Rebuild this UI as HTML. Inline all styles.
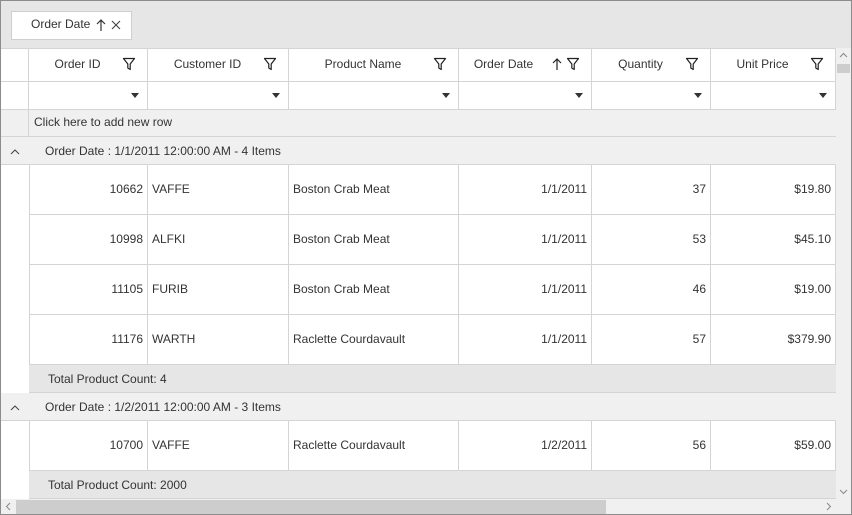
<!DOCTYPE html>
<html><head><style>
*{box-sizing:border-box;margin:0;padding:0}
body{width:852px;height:515px;overflow:hidden;background:#fff;font-family:"Segoe UI","Liberation Sans",sans-serif;font-size:12px;color:#333}
.a{position:absolute}
.outer{left:0;top:0;width:852px;height:515px;border:1px solid #8c8c8c}
.c{position:absolute;border-right:1px solid #d4d4d4;border-bottom:1px solid #d4d4d4;white-space:nowrap}
.t{position:absolute;white-space:nowrap}
.dd{position:absolute;width:0;height:0;border-left:4px solid transparent;border-right:4px solid transparent;border-top:5px solid #333}
</style></head><body>
<div class="a outer"></div>
<div class="a" style="left:1px;top:1px;width:850px;height:47px;background:#e6e6e6"></div>
<div class="a" style="left:11px;top:11px;width:121px;height:29px;background:#fff;border:1px solid #cfcfcf"></div>
<div class="t" style="left:31px;top:17px;color:#333">Order Date</div>
<svg class="a" style="left:95px;top:18px" width="28" height="14"><path d="M6 13V2M2 6l4-4 4 4" stroke="#333" fill="none" stroke-width="1.2"/><path d="M17 3l8 8M25 3l-8 8" stroke="#444" stroke-width="1.1"/></svg>
<div id="g"></div>
<script>
var cols=[[1,29],[29,148],[148,289],[289,459],[459,592],[592,711],[711,836]];
var names=["Order ID","Customer ID","Product Name","Order Date","Quantity","Unit Price"];
var h="";
function cell(x,y,w,hh,bg,bl){h+='<div class="c" style="left:'+x+'px;top:'+y+'px;width:'+w+'px;height:'+hh+'px;background:'+bg+(bl?';border-left:1px solid #d4d4d4':'')+'"></div>';}
for(var i=0;i<7;i++){var x=cols[i][0],w=cols[i][1]-x;cell(x,48,w,34,'#fff');cell(x,82,w,28,'#fff');
 h+='<div class="a" style="left:'+x+'px;top:48px;width:'+w+'px;height:1px;background:#d4d4d4"></div>';
 if(i>0){
 h+='<div class="t" style="left:'+x+'px;top:57px;width:'+(w-(i==4?44:22))+'px;text-align:center;color:#333">'+names[i-1]+'</div>';
 h+='<svg class="a" style="left:'+(cols[i][1]-26)+'px;top:57px" width="14" height="14"><path d="M1.5 1.5h11L8.2 7v5.5L5.8 11V7z" fill="none" stroke="#222" stroke-width="1.2" stroke-linejoin="round"/></svg>';
 if(i==4)h+='<svg class="a" style="left:'+(cols[i][1]-40)+'px;top:57px" width="10" height="14"><path d="M5 13V2M1 6l4-4 4 4" stroke="#222" fill="none" stroke-width="1.2"/></svg>';
 h+='<div class="dd" style="left:'+(cols[i][1]-17)+'px;top:93px"></div>';}}
h+='<div class="a" style="left:1px;top:110px;width:835px;height:27px;background:#f0f0f0;border-bottom:1px solid #d4d4d4"></div>';
h+='<div class="a" style="left:28px;top:110px;width:1px;height:27px;background:#d4d4d4"></div>';
h+='<div class="t" style="left:34px;top:115px">Click here to add new row</div>';
function grp(y,txt){h+='<div class="a" style="left:1px;top:'+y+'px;width:835px;height:28px;background:#f0f0f0;border-bottom:1px solid #d4d4d4"></div>';
 h+='<svg class="a" style="left:10px;top:'+(y+11)+'px" width="10" height="8"><path d="M1 6l4-4 4 4" fill="none" stroke="#444" stroke-width="1"/></svg>';
 h+='<div class="t" style="left:45px;top:'+(y+7)+'px">'+txt+'</div>';}
function sum(y,txt){h+='<div class="a" style="left:29px;top:'+y+'px;width:807px;height:28px;background:#e6e6e6;border-bottom:1px solid #d4d4d4"></div>';
 h+='<div class="t" style="left:48px;top:'+(y+7)+'px">'+txt+'</div>';}
function row(y,d){for(var i=1;i<7;i++){var x=cols[i][0],w=cols[i][1]-x;cell(x,y,w,50,'#fff',i==1);
 var r=(i==1||i==4||i==5||i==6);
 h+='<div class="t" style="left:'+(x+4)+'px;width:'+(w-9)+'px;top:'+(y+17)+'px;text-align:'+(r?'right':'left')+'">'+d[i-1]+'</div>';}}
grp(137,'Order Date : 1/1/2011 12:00:00 AM - 4 Items');
var rows=[["10662","VAFFE","Boston Crab Meat","1/1/2011","37","$19.80"],["10998","ALFKI","Boston Crab Meat","1/1/2011","53","$45.10"],["11105","FURIB","Boston Crab Meat","1/1/2011","46","$19.00"],["11176","WARTH","Raclette Courdavault","1/1/2011","57","$379.90"]];
for(var k=0;k<4;k++)row(165+50*k,rows[k]);
sum(365,'Total Product Count: 4');
grp(393,'Order Date : 1/2/2011 12:00:00 AM - 3 Items');
row(421,["10700","VAFFE","Raclette Courdavault","1/2/2011","56","$59.00"]);
sum(471,'Total Product Count: 2000');
document.getElementById('g').innerHTML=h;
</script>
<div class="a" style="left:836px;top:48px;width:15px;height:451px;background:#f0f0f0"></div>
<div class="a" style="left:837px;top:64px;width:13px;height:9px;background:#cdcdcd"></div>
<svg class="a" style="left:839px;top:52px" width="9" height="6"><path d="M1 5l3.5-3.5L8 5" fill="none" stroke="#888"/></svg>
<svg class="a" style="left:839px;top:489px" width="9" height="6"><path d="M1 1l3.5 3.5L8 1" fill="none" stroke="#888"/></svg>
<div class="a" style="left:1px;top:499px;width:850px;height:15px;background:#f0f0f0"></div>
<div class="a" style="left:16px;top:500px;width:590px;height:14px;background:#cdcdcd"></div>
<svg class="a" style="left:5px;top:502px" width="6" height="9"><path d="M5 1L1.5 4.5 5 8" fill="none" stroke="#888"/></svg>
<svg class="a" style="left:826px;top:502px" width="6" height="9"><path d="M1 1l3.5 3.5L1 8" fill="none" stroke="#888"/></svg>
</body></html>
